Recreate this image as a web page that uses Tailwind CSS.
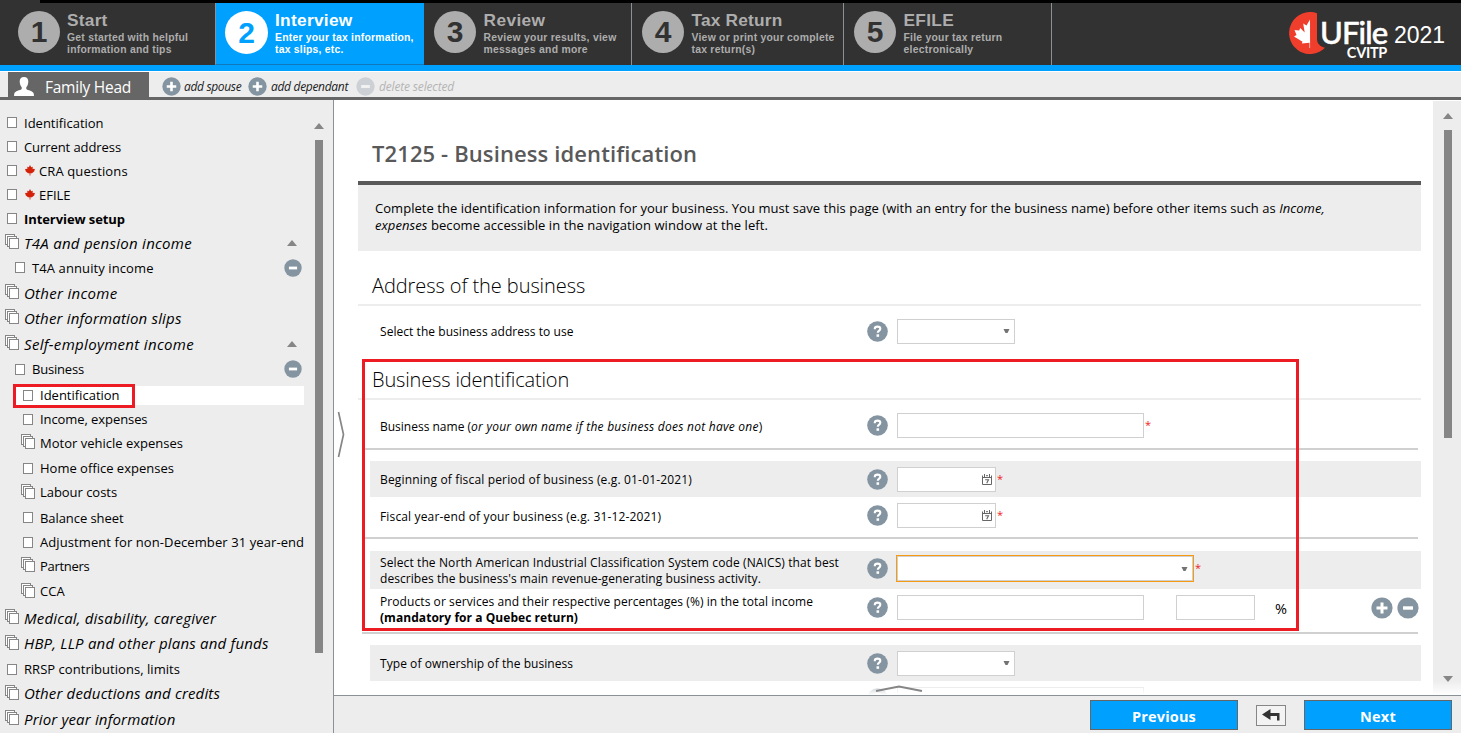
<!DOCTYPE html>
<html lang="en">
<head>
<meta charset="utf-8">
<title>UFile 2021 - Interview</title>
<script src="https://cdn.jsdelivr.net/npm/@tailwindcss/browser@4"></script>
</head>
<body class="relative flex h-[733px] w-[1461px] flex-col overflow-hidden bg-white font-['Open_Sans','Noto_Sans',sans-serif] text-[13px] text-black">

<svg class="hidden">
  <symbol id="box" viewBox="0 0 10 11"><rect x=".5" y=".5" width="9" height="10" fill="#fff" stroke="#868686"/></symbol>
  <symbol id="stack" viewBox="0 0 14 15"><g fill="#fff" stroke="#868686"><rect x=".5" y=".5" width="9" height="10"/><rect x="2.5" y="2.5" width="9" height="10"/><rect x="4.5" y="4.5" width="9" height="10"/></g></symbol>
  <symbol id="leaf" viewBox="0 0 10 11"><path d="M5 0L6.200 2.200L7.800 1.700L7.500 3.700L10 3.900L9.300 5.500L9.600 6L7 8.200H5.400V10.500H4.600V8.200H3L.4 6L.7 5.500L0 3.900L2.500 3.700L2.200 1.700L3.800 2.200z"/></symbol>
  <symbol id="up" viewBox="0 0 10 6"><path d="M5 0L10 6H0z" fill="#868686"/></symbol>
  <symbol id="drop" viewBox="0 0 7 4"><path d="M.5 0h6L4.500 4h-2z" fill="#737373"/></symbol>
  <symbol id="minus" viewBox="0 0 22 22"><circle cx="11" cy="11" r="10.600" fill="#8494a1"/><rect x="6" y="9.300" width="10" height="3.400" fill="#fff"/></symbol>
  <symbol id="plus" viewBox="0 0 22 22"><circle cx="11" cy="11" r="10.600" fill="#8494a1"/><path d="M9.500 5.500h3v4h4v3h-4v4h-3v-4h-4v-3h4z" fill="#fff"/></symbol>
  <symbol id="help" viewBox="0 0 21 21"><circle cx="10.500" cy="10.500" r="10.300" fill="#8494a1"/><path d="M7.800 8.300V7.700c0-1.300 1-2.100 2.700-2.100s2.800.8 2.800 2.200c0 1.900-2.500 1.900-2.500 4" fill="none" stroke="#fff" stroke-width="2.100"/><rect x="9.500" y="13.300" width="2.600" height="2.500" fill="#fff"/></symbol>
  <symbol id="cal" viewBox="0 0 10 11"><path d="M.5 1.500V10.500H9.500V1.500M0 3.500H10M2.500 0V3M7.500 0V3M4 1.700h2" fill="none" stroke="#666" stroke-width="1"/><path d="M3.200 5.700H6.500L4.700 9.200" fill="none" stroke="#666" stroke-width="1.100"/></symbol>
</svg>

<div class="flex h-[3px] shrink-0 bg-black"><div class="w-10 bg-[#323232]"></div></div>

<header class="flex h-[62px] shrink-0 justify-between bg-[#323232] font-['Liberation_Sans',sans-serif] font-bold text-[#adadad]">
  <nav class="flex">
    <div class="flex w-[215px] pl-[18px] pt-2">
      <div class="mr-[7px] flex size-[42px] items-center justify-center rounded-full bg-[#adadad] text-[30px] leading-none text-[#323232]">1</div>
      <div><div class="text-[17.3px] leading-[19px] tracking-[.25px]">Start</div><div class="mt-[2px] text-[10.4px] leading-[12px] tracking-[.24px]">Get started with helpful<br>information and tips</div></div>
    </div>
    <div class="flex w-[209px] border-b border-l border-b-[#1278bb] border-l-[#8a9297] bg-[#00a0ff] pl-[9px] pt-2 text-white">
      <div class="mr-[7px] flex size-[43px] items-center justify-center rounded-full bg-white text-[30px] leading-none text-[#00a0ff]">2</div>
      <div><div class="text-[17.3px] leading-[19px] tracking-[.3px]">Interview</div><div class="mt-[2px] whitespace-nowrap text-[10.4px] leading-[12px] tracking-[.22px]">Enter your tax information,<br>tax slips, etc.</div></div>
    </div>
    <div class="flex w-[208px] border-r border-[#8a9297] pl-[10px] pt-2">
      <div class="mr-[7.5px] flex size-[42px] items-center justify-center rounded-full bg-[#adadad] text-[30px] leading-none text-[#323232]">3</div>
      <div><div class="text-[17.3px] leading-[19px] tracking-[.4px]">Review</div><div class="mt-[2px] whitespace-nowrap text-[10.4px] leading-[12px] tracking-[.26px]">Review your results, view<br>messages and more</div></div>
    </div>
    <div class="flex w-[212px] border-r border-[#8a9297] pl-[10px] pt-2">
      <div class="mr-[7.5px] flex size-[42px] items-center justify-center rounded-full bg-[#adadad] text-[30px] leading-none text-[#323232]">4</div>
      <div><div class="text-[17.3px] leading-[19px] tracking-[.2px]">Tax Return</div><div class="mt-[2px] whitespace-nowrap text-[10.4px] leading-[12px] tracking-[.24px]">View or print your complete<br>tax return(s)</div></div>
    </div>
    <div class="flex w-[208px] border-r border-[#8a9297] pl-[10px] pt-2">
      <div class="mr-[7.5px] flex size-[42px] items-center justify-center rounded-full bg-[#adadad] text-[30px] leading-none text-[#323232]">5</div>
      <div><div class="text-[17.3px] leading-[19px] tracking-[.3px]">EFILE</div><div class="mt-[2px] whitespace-nowrap text-[10.4px] leading-[12px] tracking-[.24px]">File your tax return<br>electronically</div></div>
    </div>
  </nav>
  <div class="flex pr-4 pt-[9px] font-normal text-white">
    <svg class="h-[42px] w-[37px]" viewBox="0 0 37 42"><path d="M28 1.200V27c0 4.500 3 7.500 8 8.800A21 21 0 1 1 28 1.200z" fill="#ef3e2c"/><path d="M21 7.500l-3.500 6-3.300-2 1.500 9-4.500-4.500-1 2.500-4.700-.5 2 5L5 24.500l8.500 5.200-.7 1.800 7.700-.8V36h.6z" fill="#fff"/></svg>
    <div class="-ml-[6px] w-[67px] font-['Lato',sans-serif]">
      <div class="h-[34px] text-[31px] font-medium leading-[41px] tracking-[-.9px] [-webkit-text-stroke:.5px_white]">UFile</div>
      <div class="text-right text-[14.5px] font-bold leading-[13px] tracking-[-.3px]">CVITP</div>
    </div>
    <div class="ml-[7px] w-[51px] text-[23px] leading-[46px]">2021</div>
  </div>
</header>
<div class="h-1.5 shrink-0 bg-[#00a0ff]"></div>

<div class="mt-px flex h-7 shrink-0 border-b-[3px] border-[#666] bg-[#ededed] pl-2">
  <div class="flex w-[141px] items-center bg-[#666] pl-[6px] pt-[6px] text-[15.5px] tracking-[-.25px] text-white">
    <svg class="mb-[2px] mr-[11px] h-[19px] w-5" viewBox="0 0 20 19"><path d="M10 0c3 0 4.300 2 4.300 4.600 0 2.500-1 4.600-2 5.700v1.700c1.200 1.300 7 2 7.400 4.500L20 19H0l.3-2.500c.4-2.500 6.200-3.200 7.400-4.500v-1.700c-1-1.100-2-3.200-2-5.700C5.700 2 7 0 10 0z" fill="#fff"/></svg>Family Head</div>
  <div class="flex items-center pl-[13px] pt-[5px] text-[12px] italic text-[#222]">
    <svg class="mb-[2px] mr-[3px] size-[19px]"><use href="#plus"/></svg><span class="w-[64px] tracking-[-.34px]">add spouse</span>
    <svg class="mb-[2px] mr-1 size-[19px]"><use href="#plus"/></svg><span class="w-[85px] tracking-[-.31px]">add dependant</span>
    <svg class="mb-[2px] mr-1 size-[19px] opacity-30"><use href="#minus"/></svg><span class="tracking-[-.16px] text-[#b4b4b4]">delete selected</span>
  </div>
</div>

<div class="flex min-h-0 flex-1">
  <aside class="flex w-[334px] shrink-0 border-r border-[#8a9297] bg-[#ededed]">
    <div class="w-[304px] whitespace-nowrap pt-[11px]">
      <div class="flex h-6 items-center pl-[7px] pt-[2px]"><svg class="mb-[3px] mr-[7px] h-[11px] w-[10px]"><use href="#box"/></svg>Identification</div>
      <div class="flex h-6 items-center pl-[7px] pt-[2px] tracking-[-.08px]"><svg class="mb-[3px] mr-[7px] h-[11px] w-[10px]"><use href="#box"/></svg>Current address</div>
      <div class="flex h-6 items-center pl-[7px] pt-[2px] tracking-[.12px]"><svg class="mb-[3px] mr-[8px] h-[11px] w-[10px]"><use href="#box"/></svg><svg class="mb-[3px] mr-[4px] h-[11px] w-[10px] fill-[#d42208]"><use href="#leaf"/></svg>CRA questions</div>
      <div class="flex h-6 items-center pl-[7px] pt-[2px]"><svg class="mb-[3px] mr-[8px] h-[11px] w-[10px]"><use href="#box"/></svg><svg class="mb-[3px] mr-[4px] h-[11px] w-[10px] fill-[#d42208]"><use href="#leaf"/></svg>EFILE</div>
      <div class="flex h-6 items-center pl-[7px] pt-[2px] font-bold tracking-[-.08px]"><svg class="mb-[3px] mr-[7px] h-[11px] w-[10px]"><use href="#box"/></svg>Interview setup</div>
      <div class="flex h-[25px] items-center pl-[5px] text-[15px] italic tracking-[.27px]"><svg class="mb-[4px] mr-[5px] h-[15px] w-[14px]"><use href="#stack"/></svg>T4A and pension income<svg class="mb-px ml-auto mr-[7px] h-1.5 w-[10px]"><use href="#up"/></svg></div>
      <div class="flex h-6 items-center pl-[15px] pt-[2px] tracking-[.1px]"><svg class="mb-[3px] mr-[7px] h-[11px] w-[10px]"><use href="#box"/></svg>T4A annuity income<svg class="mb-[2px] ml-auto mr-[2px] size-[18px]"><use href="#minus"/></svg></div>
      <div class="flex h-[26px] items-center pl-[5px] text-[15px] italic tracking-[.3px]"><svg class="mb-[4px] mr-[5px] h-[15px] w-[14px]"><use href="#stack"/></svg>Other income</div>
      <div class="flex h-[25px] items-center pl-[5px] text-[15px] italic tracking-[.17px]"><svg class="mb-[4px] mr-[5px] h-[15px] w-[14px]"><use href="#stack"/></svg>Other information slips</div>
      <div class="flex h-[26px] items-center pl-[5px] text-[15px] italic tracking-[.33px]"><svg class="mb-[4px] mr-[5px] h-[15px] w-[14px]"><use href="#stack"/></svg>Self-employment income<svg class="mb-px ml-auto mr-[7px] h-1.5 w-[10px]"><use href="#up"/></svg></div>
      <div class="flex h-[25px] items-center pl-[15px] tracking-[-.19px]"><svg class="mr-[7px] h-[11px] w-[10px]"><use href="#box"/></svg>Business<svg class="mb-px ml-auto mr-[2px] size-[18px]"><use href="#minus"/></svg></div>
      <div class="relative my-1 ml-[15px] flex h-[19px] items-center bg-white pl-2"><svg class="mr-[7px] h-[11px] w-[10px]"><use href="#box"/></svg>Identification
        <div class="absolute -left-[2px] -top-[2px] h-6 w-[122px] border-[3px] border-[#ed1c24]"></div></div>
      <div class="-mt-px flex h-[22px] items-center pl-[23px] pt-[2px] tracking-[-.08px]"><svg class="mb-[2px] mr-[7px] h-[11px] w-[10px]"><use href="#box"/></svg>Income, expenses</div>
      <div class="flex h-[26px] items-center pl-[21px] pt-[2px]"><svg class="mb-[5px] mr-[5px] h-[15px] w-[14px]"><use href="#stack"/></svg>Motor vehicle expenses</div>
      <div class="flex h-6 items-center pl-[23px] pt-[2px]"><svg class="mb-[2px] mr-[7px] h-[11px] w-[10px]"><use href="#box"/></svg>Home office expenses</div>
      <div class="flex h-[25px] items-center pl-[21px] tracking-[-.04px]"><svg class="mb-[3px] mr-[5px] h-[15px] w-[14px]"><use href="#stack"/></svg>Labour costs</div>
      <div class="flex h-[25px] items-center pl-[23px] pt-[2px] tracking-[-.07px]"><svg class="mb-[2px] mr-[7px] h-[11px] w-[10px]"><use href="#box"/></svg>Balance sheet</div>
      <div class="flex h-6 items-center pl-[23px] pt-[2px] tracking-[.09px]"><svg class="mb-[2px] mr-[7px] h-[11px] w-[10px] shrink-0"><use href="#box"/></svg>Adjustment for non-December 31 year-end</div>
      <div class="flex h-6 items-center pl-[21px] pt-[2px] tracking-[-.28px]"><svg class="mb-[5px] mr-[5px] h-[15px] w-[14px]"><use href="#stack"/></svg>Partners</div>
      <div class="flex h-[26px] items-center pl-[21px] pt-[2px]"><svg class="mb-[4px] mr-[5px] h-[15px] w-[14px]"><use href="#stack"/></svg>CCA</div>
      <div class="flex h-7 items-center pl-[5px] text-[15px] italic tracking-[.18px]"><svg class="mb-[3px] mr-[5px] h-[15px] w-[14px]"><use href="#stack"/></svg>Medical, disability, caregiver</div>
      <div class="flex h-6 items-center pb-px pl-[5px] text-[15px] italic tracking-[.2px]"><svg class="mb-[3px] mr-[5px] h-[15px] w-[14px]"><use href="#stack"/></svg>HBP, LLP and other plans and funds</div>
      <div class="flex h-[26px] items-center pl-[7px] pt-[2px] tracking-[.04px]"><svg class="mb-[2px] mr-[7px] h-[11px] w-[10px]"><use href="#box"/></svg>RRSP contributions, limits</div>
      <div class="flex h-6 items-center pb-px pl-[5px] text-[15px] italic tracking-[.15px]"><svg class="mb-[3px] mr-[5px] h-[15px] w-[14px]"><use href="#stack"/></svg>Other deductions and credits</div>
      <div class="flex h-[26px] items-center pl-[5px] text-[15px] italic tracking-[.16px]"><svg class="mb-[3px] mr-[5px] h-[15px] w-[14px]"><use href="#stack"/></svg>Prior year information</div>
    </div>
    <div class="ml-[10px] flex w-[10px] flex-col items-center pt-[23px]">
      <svg class="h-1.5 w-[10px]"><use href="#up"/></svg>
      <div class="mt-[11px] h-[513px] w-2 bg-[#868686]"></div>
    </div>
  </aside>

  <main class="relative flex min-w-0 flex-1 flex-col">
    <div class="flex h-[595px] shrink-0 overflow-hidden">
      <div class="ml-[24px] w-[1063px] pt-[38px] text-[12px]">
        <h1 class="mb-3 pl-[14px] text-[22px] font-semibold leading-[31px] tracking-[.11px] text-[#595959]">T2125 - Business identification</h1>
        <div class="h-[70px] border-t-4 border-[#595959] bg-[#ededed] pl-[17px] pt-[15px] text-[13px] leading-[17px]"><span class="tracking-[.037px]">Complete the identification information for your business. You must save this page (with an entry for the business name) before other items such as <i>Income,</i></span><br><span class="tracking-[.075px]"><i>expenses</i> become accessible in the navigation window at the left.</span></div>
        <h2 class="mt-[20px] border-b-2 border-[#ededed] pb-[3px] pl-[14px] text-[20px] font-light leading-[30px] tracking-[-.08px]">Address of the business</h2>
        <div class="ml-3 flex h-[51px] items-center pl-[10px]">
          <div class="w-[487px] tracking-[.05px]">Select the business address to use</div>
          <svg class="size-[21px]"><use href="#help"/></svg>
          <div class="ml-[9px] flex h-[25px] w-[118px] items-center justify-end border border-[#d0d0d0] bg-white pr-1"><svg class="mb-px h-1 w-[7px]"><use href="#drop"/></svg></div>
        </div>
        <h2 class="mt-[8px] border-b-2 border-[#ededed] pb-[3px] pl-[14px] text-[20px] font-light leading-[30px] tracking-[-.155px]">Business identification</h2>
        <div class="ml-3 flex h-12 items-center pl-[10px] pt-[3px]">
          <div class="w-[487px] pt-[2px]">Business name (<i class="tracking-[.25px]">or your own name if the business does not have one</i>)</div>
          <svg class="size-[21px]"><use href="#help"/></svg>
          <div class="ml-[9px] h-[25px] w-[247px] border border-[#d0d0d0] bg-white"></div><span class="ml-px text-[11px] text-[#ed1c24]">*</span>
        </div>
        <div class="mb-[11px] ml-1 h-0.5 w-[1056px] bg-[#d0d0d0]"></div>
        <div class="ml-3 flex h-9 items-center bg-[#ededed] pl-[10px]">
          <div class="w-[487px] pt-[2px] tracking-[.16px]">Beginning of fiscal period of business (e.g. 01-01-2021)</div>
          <svg class="size-[21px]"><use href="#help"/></svg>
          <div class="ml-[9px] flex h-[25px] w-[99px] items-center justify-end border border-[#d0d0d0] bg-white pr-[3px]"><svg class="h-[11px] w-[10px]"><use href="#cal"/></svg></div><span class="ml-px text-[11px] text-[#ed1c24]">*</span>
        </div>
        <div class="ml-3 flex h-9 items-center pl-[10px]">
          <div class="w-[487px] pt-[3px] tracking-[.15px]">Fiscal year-end of your business (e.g. 31-12-2021)</div>
          <svg class="size-[21px]"><use href="#help"/></svg>
          <div class="ml-[9px] flex h-[25px] w-[99px] items-center justify-end border border-[#d0d0d0] bg-white pr-[3px]"><svg class="h-[11px] w-[10px]"><use href="#cal"/></svg></div><span class="ml-px text-[11px] text-[#ed1c24]">*</span>
        </div>
        <div class="mb-3 ml-1 mt-1 h-0.5 w-[1056px] bg-[#d0d0d0]"></div>
        <div class="ml-3 flex h-[38px] items-center bg-[#ededed] pb-[3px] pl-[10px]">
          <div class="mt-[5px] w-[487px] leading-[16px]"><span class="tracking-[.11px]">Select the North American Industrial Classification System code (NAICS) that best</span><br><span class="tracking-[.06px]">describes the business's main revenue-generating business activity.</span></div>
          <svg class="size-[21px]"><use href="#help"/></svg>
          <div class="ml-[8px] flex h-[27px] w-[298px] items-center justify-end border border-[#f79a13] bg-white pr-[5px] inset-ring inset-ring-[#d0d0d0]"><svg class="h-1 w-[7px]"><use href="#drop"/></svg></div><span class="ml-px text-[11px] text-[#ed1c24]">*</span>
        </div>
        <div class="ml-3 flex h-[43px] items-center pb-[6px] pl-[10px]">
          <div class="mt-[5px] w-[487px] leading-[16px]"><span class="tracking-[.08px]">Products or services and their respective percentages (%) in the total income</span><br><b class="tracking-[.05px]">(mandatory for a Quebec return)</b></div>
          <svg class="size-[21px]"><use href="#help"/></svg>
          <div class="ml-[9px] h-[25px] w-[247px] border border-[#d0d0d0] bg-white"></div>
          <div class="ml-8 h-[25px] w-[79px] border border-[#d0d0d0] bg-white"></div>
          <span class="ml-[20px] pt-[2px] text-[14.5px]">%</span>
          <svg class="ml-auto mr-1 size-[22px]"><use href="#plus"/></svg><svg class="mr-[2px] size-[22px]"><use href="#minus"/></svg>
        </div>
        <div class="mb-[11px] ml-1 h-0.5 w-[1056px] bg-[#d0d0d0]"></div>
        <div class="ml-3 flex h-9 items-center bg-[#ededed] pl-[10px]">
          <div class="w-[487px] pt-[2px] tracking-[.06px]">Type of ownership of the business</div>
          <svg class="size-[21px]"><use href="#help"/></svg>
          <div class="ml-[9px] flex h-[25px] w-[118px] items-center justify-end border border-[#d0d0d0] bg-white pr-1"><svg class="mb-px h-1 w-[7px]"><use href="#drop"/></svg></div>
        </div>
        <div class="ml-[509px] flex pt-[6px] opacity-70">
          <svg class="mt-px size-[21px]"><use href="#help"/></svg>
          <div class="ml-[9px] h-[25px] w-[247px] border border-[#d0d0d0] bg-white"></div>
        </div>
      </div>
      <div class="ml-3 mt-px flex w-7 flex-col items-center bg-[#ededed] pl-[2px] pt-3">
        <svg class="h-1.5 w-[10px]"><use href="#up"/></svg>
        <div class="mt-[11px] h-[308px] w-2 bg-[#868686]"></div>
        <svg class="mt-[238px] h-1.5 w-[10px] rotate-180"><use href="#up"/></svg>
      </div>
    </div>
    <!-- scroll fade and collapse handles over the form -->
    <div class="absolute left-0 right-0 top-[581px] h-[14px] bg-linear-to-b from-white/0 to-white"></div>
    <svg class="absolute left-[541px] top-[585px] h-[8px] w-[48px]" viewBox="0 0 48 8"><path d="M1 6L24 1.500L47 6" fill="none" stroke="#868686" stroke-width="1.800"/></svg>
    <svg class="absolute left-[3px] top-[311px] h-[47px] w-[9px]" viewBox="0 0 9 47"><path d="M1.500 1L6.500 23.500L1.500 46" fill="none" stroke="#868686" stroke-width="1.700"/></svg>
    <div class="absolute left-[28px] top-[259px] h-[272px] w-[937px] border-[3px] border-[#ed1c24]"></div>

    <footer class="flex flex-1 items-start justify-end border-t border-[#8a9297] bg-[#ededed] pr-[9px] pt-1 text-[14.5px] font-bold text-white">
      <div class="flex h-[30px] w-[148px] items-center justify-center border border-[#666] bg-[#00a0ff] pt-[3px] tracking-[.17px]">Previous</div>
      <div class="ml-[18px] mr-[18px] mt-[5px] flex h-[21px] w-[30px] items-center justify-center border border-[#868686] bg-[#f3f3f3]"><svg class="mb-[2px] h-[12px] w-[18px]" viewBox="0 0 18 12"><path d="M0 5.500L8.500 0V4H17.500V11.500H15V7H8.500V11z" fill="#333"/></svg></div>
      <div class="flex h-[30px] w-[148px] items-center justify-center border border-[#666] bg-[#00a0ff] pt-[3px] tracking-[.24px]">Next</div>
    </footer>
  </main>
</div>
</body>
</html>
